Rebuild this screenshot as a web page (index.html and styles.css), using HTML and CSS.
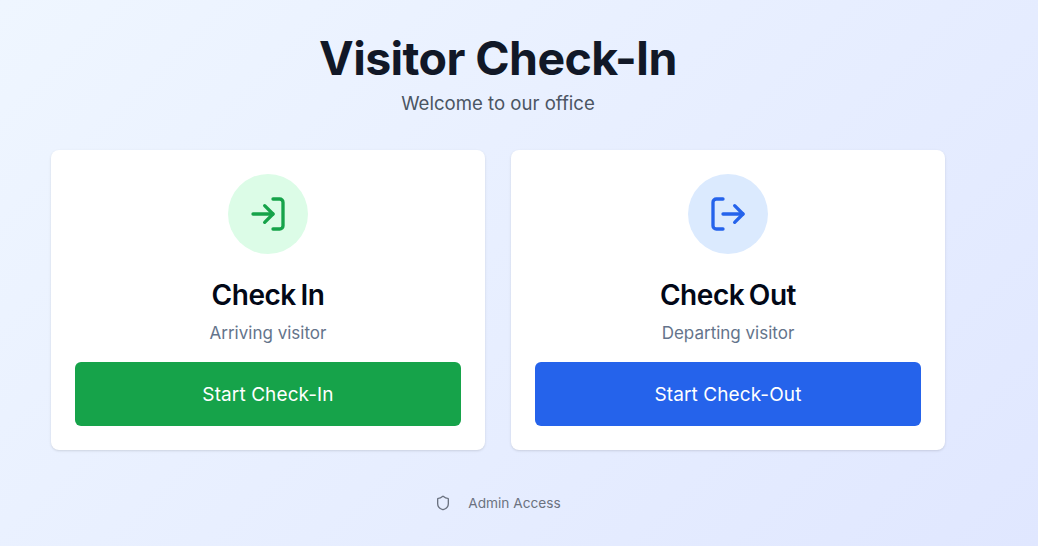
FILE: index.html
```html
<!DOCTYPE html>
<html lang="en">
<head>
<meta charset="utf-8">
<title>Visitor Check-In</title>
<link rel="stylesheet" href="styles.css">
</head>
<body>
<main class="page">
  <header class="header">
    <h1 class="title">Visitor Check-In</h1>
    <p class="subtitle">Welcome to our office</p>
  </header>
  <section class="cards">
    <article class="card">
      <div class="badge badge-green">
        <svg class="badge-icon" viewBox="0 0 24 24" fill="none" stroke="currentColor" stroke-width="2" stroke-linecap="round" stroke-linejoin="round"><path d="M15 3h4a2 2 0 0 1 2 2v14a2 2 0 0 1-2 2h-4"/><polyline points="10 17 15 12 10 7"/><line x1="15" y1="12" x2="3" y2="12"/></svg>
      </div>
      <h2 class="card-title">Check In</h2>
      <p class="card-text">Arriving visitor</p>
      <button class="btn btn-green" type="button">Start Check-In</button>
    </article>
    <article class="card">
      <div class="badge badge-blue">
        <svg class="badge-icon" viewBox="0 0 24 24" fill="none" stroke="currentColor" stroke-width="2" stroke-linecap="round" stroke-linejoin="round"><path d="M9 21H5a2 2 0 0 1-2-2V5a2 2 0 0 1 2-2h4"/><polyline points="16 17 21 12 16 7"/><line x1="21" y1="12" x2="9" y2="12"/></svg>
      </div>
      <h2 class="card-title">Check Out</h2>
      <p class="card-text">Departing visitor</p>
      <button class="btn btn-blue" type="button">Start Check-Out</button>
    </article>
  </section>
  <footer class="footer">
    <svg class="footer-icon" viewBox="0 0 24 24" fill="none" stroke="currentColor" stroke-width="2" stroke-linecap="round" stroke-linejoin="round"><path d="M20 13c0 5-3.5 7.5-7.66 8.95a1 1 0 0 1-.67-.01C7.5 20.5 4 18 4 13V6a1 1 0 0 1 1-1c2 0 4.5-1.2 6.24-2.72a1.17 1.17 0 0 1 1.52 0C14.51 3.81 17 5 19 5a1 1 0 0 1 1 1z"/></svg>
    <span class="footer-text">Admin Access</span>
  </footer>
</main>
</body>
</html>
```
FILE: styles.css
```css
* { box-sizing: border-box; }
html, body { margin: 0; height: 100%; }
body {
  font-family: Inter, "Liberation Sans", sans-serif;
  background: linear-gradient(135deg, #eff6ff 0%, #e0e7ff 100%);
  overflow: hidden;
}
.page {
  width: 998px;
  padding: 32px 53px 0 51px;
  display: flex;
  flex-direction: column;
}
.header { text-align: center; margin-bottom: 33px; width: 894px; }
.title {
  margin: 0 0 5px;
  font-size: 46.5px;
  line-height: 52px;
  font-weight: 700;
  letter-spacing: -0.6px;
  color: #111827;
}
.subtitle { margin: 0; font-size: 18.6px; line-height: 28px; color: #4b5563; }
.cards { display: grid; grid-template-columns: 434px 434px; gap: 26px; }
.card {
  background: #fff;
  border-radius: 8px;
  padding: 24px;
  height: 300px;
  display: flex;
  flex-direction: column;
  align-items: center;
  box-shadow: 0 1px 3px rgba(0,0,0,.1), 0 1px 2px -1px rgba(0,0,0,.1);
}
.badge {
  width: 80px;
  height: 80px;
  border-radius: 50%;
  display: flex;
  align-items: center;
  justify-content: center;
  margin-bottom: 24px;
  flex: none;
}
.badge-green { background: #dcfce7; color: #16a34a; }
.badge-blue { background: #dbeafe; color: #2563eb; }
.badge-icon { width: 40px; height: 40px; }
.card-title {
  margin: 0 0 7px;
  font-size: 28px;
  line-height: 34px;
  font-weight: 600;
  letter-spacing: -0.45px;
  word-spacing: -2px;
  color: #020817;
}
.card-text { margin: 0 0 15px; font-size: 17px; line-height: 28px; color: #64748b; }
.btn {
  flex: none;
  width: 100%;
  height: 64px;
  border: 0;
  border-radius: 6px;
  color: #fff;
  font-family: inherit;
  font-size: 19px;
  font-weight: 400;
  letter-spacing: 0.1px;
}
.btn-green { background: #16a34a; }
.btn-blue { background: #2563eb; }
.footer {
  width: 894px;
  margin-top: 40px;
  height: 26px;
  display: flex;
  justify-content: center;
  align-items: center;
  gap: 17px;
  color: #6b7280;
  font-size: 13.7px;
  font-weight: 400;
}
.footer-icon { width: 16px; height: 16px; margin-top: -1px; }
```
